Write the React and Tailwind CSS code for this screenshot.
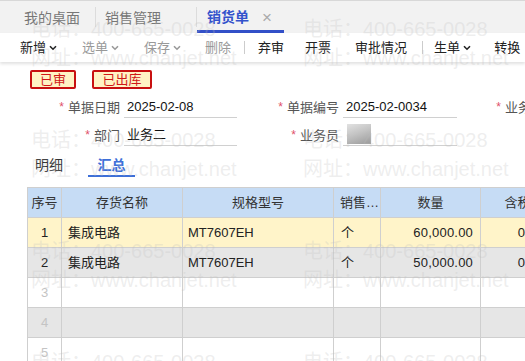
import React from 'react'

const cols = [34, 121, 151, 47, 100, 100]

const rows = [
  { no: '1', name: '集成电路', spec: 'MT7607EH', unit: '个', qty: '60,000.00', price: '0.150000', bg: 'bg-[#fff4c9]' },
  { no: '2', name: '集成电路', spec: 'MT7607EH', unit: '个', qty: '50,000.00', price: '0.150000', bg: 'bg-[#e6e6e6]' },
  { no: '3', bg: 'bg-white' },
  { no: '4', bg: 'bg-[#e6e6e6]' },
  { no: '5', bg: 'bg-white' },
]

function Caret({ className }) {
  return (
    <svg width="8" height="6" viewBox="0 0 8 6" className={className}>
      <path d="M1 1.2l3 3 3-3" fill="none" stroke="currentColor" strokeWidth="1.6" />
    </svg>
  )
}

function Field({ labelW, label, fieldW, children }) {
  return (
    <div className="flex items-end">
      <div className="flex justify-end items-center text-[13px] text-[#555] h-[20px]" style={{ width: labelW }}>
        <span className="text-[#e0506a] text-[12px] mr-[4px] mt-[-2px]">*</span>
        <span>{label}</span>
      </div>
      <div className="ml-[4px] h-[27px] flex items-end pb-[1px] pl-[3px] border-b border-[#d0d0d0] text-[13px] text-[#111]" style={{ width: fieldW }}>
        {children}
      </div>
    </div>
  )
}

function Watermark({ top, left }) {
  return (
    <div className="absolute leading-none" style={{ top, left }}>
      <div className="text-[20px] whitespace-nowrap">电话：400-665-0028</div>
      <div className="text-[20px] whitespace-nowrap mt-[9px]">网址：www.chanjet.net</div>
    </div>
  )
}

export default function App() {
  return (
    <div className="relative w-[525px] h-[361px] overflow-hidden bg-white font-['Liberation_Sans','Noto_Sans_CJK_SC',sans-serif]">
      {/* tabs */}
      <div className="h-[33px] bg-[#f2f2f2] border-t border-[#d8d8d8] flex items-stretch text-[14px]">
        <div className="w-[95px] pl-[24px] pt-[3px] flex items-center text-[#777]">我的桌面</div>
        <div className="w-px h-[20px] self-center bg-[#dcdcdc]" />
        <div className="w-[100px] pl-[9px] pt-[3px] flex items-center text-[#777]">销售管理</div>
        <div className="w-px h-[20px] self-center bg-[#dcdcdc]" />
        <div className="w-[87px] pl-[10px] flex items-center border-b-[3px] border-[#3350c8] pt-[4px]">
          <span className="font-bold text-[#3352cc]">销货单</span>
          <span className="ml-[13px] text-[#aaa] text-[17px] leading-none">×</span>
        </div>
      </div>

      {/* toolbar */}
      <div className="relative h-[29px] bg-white flex items-center text-[13px] text-[#222] shadow-[0_2px_3px_rgba(0,0,0,0.12)]">
        <div className="ml-[20px] flex items-center">新增<Caret className="ml-[3px]" /></div>
        <div className="ml-[25px] flex items-center text-[#999]">选单<Caret className="ml-[3px]" /></div>
        <div className="ml-[25px] flex items-center text-[#999]">保存<Caret className="ml-[3px]" /></div>
        <div className="ml-[24px] text-[#999]">删除</div>
        <div className="ml-[13px] w-px h-[13px] bg-[#ccc]" />
        <div className="ml-[13px]">弃审</div>
        <div className="ml-[21px]">开票</div>
        <div className="ml-[24px]">审批情况</div>
        <div className="ml-[15px] w-px h-[13px] bg-[#ccc]" />
        <div className="ml-[11px] flex items-center">生单<Caret className="ml-[3px]" /></div>
        <div className="ml-[23px] whitespace-nowrap">转换</div>
      </div>

      {/* badges */}
      <div className="flex mt-[8px] ml-[30px] gap-[16px]">
        <div className="w-[46px] h-[19px] flex items-center justify-center bg-[#fff3c4] border-2 border-[#c81010] rounded-[2px] text-[13px] text-[#d01818]">已审</div>
        <div className="w-[60px] h-[19px] flex items-center justify-center bg-[#fff3c4] border-2 border-[#c81010] rounded-[2px] text-[13px] text-[#d01818]">已出库</div>
      </div>

      {/* form */}
      <div className="mt-[2px] flex w-[700px]">
        <Field labelW={120} label="单据日期" fieldW={113}>2025-02-08</Field>
        <Field labelW={102} label="单据编号" fieldW={114}>2025-02-0034</Field>
        <Field labelW={100} label="业务类型" fieldW={114}></Field>
      </div>
      <div className="mt-[1px] flex w-[700px]">
        <Field labelW={120} label="部门" fieldW={113}>业务二</Field>
        <Field labelW={102} label="业务员" fieldW={114}>
          <div className="ml-[1px] mb-[0px] w-[24px] h-[20px] bg-[linear-gradient(160deg,#e2e2e2_0%,#c4c4c4_45%,#9a9a9a_100%)]" />
        </Field>
      </div>

      {/* sub tabs */}
      <div className="flex items-end h-[31px] text-[14px] leading-[18px]">
        <div className="ml-[35px] pb-[3px] text-[#333]">明细</div>
        <div className="ml-[25px] w-[47px] flex justify-center pb-[1px] border-b-2 border-[#3d6fd8] font-bold text-[#3d6fd8]">汇总</div>
      </div>

      {/* table */}
      <div className="mt-[10px] ml-[27px] w-[600px] border-l border-t border-[#cfcfcf] text-[13px]">
        <div className="flex h-[30px] bg-[#c6dcf5] text-[#333]">
          <div className="flex items-center justify-center border-r border-b border-[#cfcfcf]" style={{ width: cols[0] }}>序号</div>
          <div className="flex items-center justify-center border-r border-b border-[#cfcfcf]" style={{ width: cols[1] }}>存货名称</div>
          <div className="flex items-center justify-center border-r border-b border-[#cfcfcf]" style={{ width: cols[2] }}>规格型号</div>
          <div className="flex items-center pl-[6px] border-r border-b border-[#cfcfcf]" style={{ width: cols[3] }}>销售…</div>
          <div className="flex items-center justify-center border-r border-b border-[#cfcfcf]" style={{ width: cols[4] }}>数量</div>
          <div className="flex items-center justify-center border-r border-b border-[#cfcfcf]" style={{ width: cols[5] }}>含税单价</div>
        </div>
        {rows.map((r) => (
          <div key={r.no} className={`flex h-[30px] ${r.bg} text-[#222]`}>
            <div className={`flex items-center justify-center border-r border-b border-[#cfcfcf] ${r.name ? 'text-[#222]' : 'text-[#c4c4c4]'}`} style={{ width: cols[0] }}>{r.no}</div>
            <div className="flex items-center pl-[6px] border-r border-b border-[#cfcfcf]" style={{ width: cols[1] }}>{r.name}</div>
            <div className="flex items-center pl-[5px] border-r border-b border-[#cfcfcf]" style={{ width: cols[2] }}>{r.spec}</div>
            <div className="flex items-center pl-[7px] border-r border-b border-[#cfcfcf]" style={{ width: cols[3] }}>{r.unit}</div>
            <div className="flex items-center justify-end pr-[7px] border-r border-b border-[#cfcfcf] tracking-[0.2px]" style={{ width: cols[4] }}>{r.qty}</div>
            <div className="flex items-center justify-end pr-[8px] border-r border-b border-[#cfcfcf]" style={{ width: cols[5] }}>{r.price}</div>
          </div>
        ))}
      </div>

      {/* watermark */}
      <div className="absolute inset-0 pointer-events-none text-[rgba(190,190,190,0.26)]">
        <Watermark top={19} left={31} />
        <Watermark top={19} left={303} />
        <Watermark top={130} left={31} />
        <Watermark top={130} left={303} />
        <Watermark top={241} left={31} />
        <Watermark top={241} left={303} />
        <Watermark top={352} left={31} />
        <Watermark top={352} left={303} />
      </div>
    </div>
  )
}
